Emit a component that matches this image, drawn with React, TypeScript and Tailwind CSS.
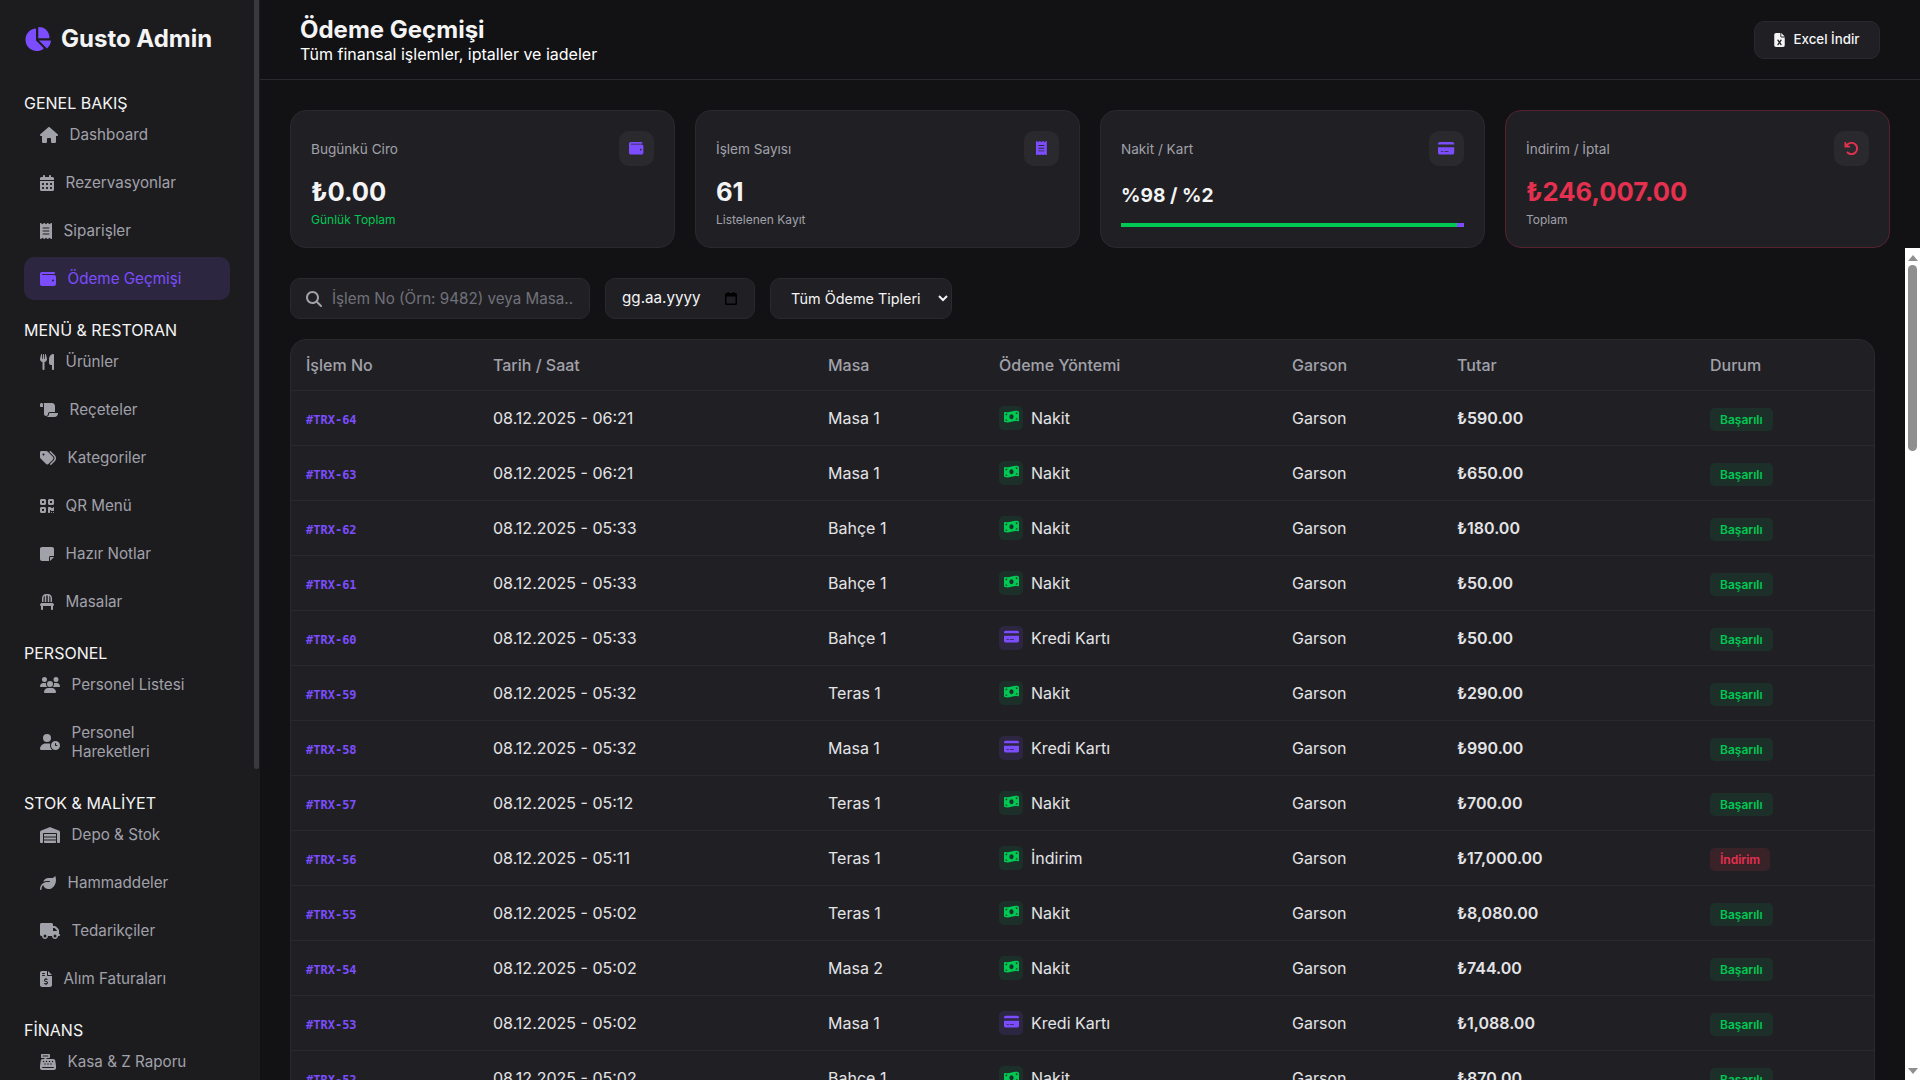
import type { IconType } from "react-icons"
import {
	FaArrowRotateLeft,
	FaCalendarDays,
	FaCashRegister,
	FaChair,
	FaChartPie,
	FaCreditCard,
	FaFileExcel,
	FaFileInvoiceDollar,
	FaHouse,
	FaLeaf,
	FaMagnifyingGlass,
	FaMoneyBillWave,
	FaNoteSticky,
	FaQrcode,
	FaReceipt,
	FaScroll,
	FaTags,
	FaTruck,
	FaUserClock,
	FaUsers,
	FaUtensils,
	FaWallet,
	FaWarehouse
} from "react-icons/fa6"

type NavItem = { label: string; icon: IconType; size: string; active?: boolean }

const nav: { title: string; items: NavItem[] }[] = [
	{
		title: "GENEL BAKIŞ",
		items: [
			{ label: "Dashboard", icon: FaHouse, size: "w-[18px] h-4" },
			{ label: "Rezervasyonlar", icon: FaCalendarDays, size: "w-3.5 h-4" },
			{ label: "Siparişler", icon: FaReceipt, size: "w-3 h-4" },
			{ label: "Ödeme Geçmişi", icon: FaWallet, size: "w-4 h-4", active: true }
		]
	},
	{
		title: "MENÜ & RESTORAN",
		items: [
			{ label: "Ürünler", icon: FaUtensils, size: "w-3.5 h-4" },
			{ label: "Reçeteler", icon: FaScroll, size: "w-[18px] h-4" },
			{ label: "Kategoriler", icon: FaTags, size: "w-4 h-4" },
			{ label: "QR Menü", icon: FaQrcode, size: "w-3.5 h-4" },
			{ label: "Hazır Notlar", icon: FaNoteSticky, size: "w-3.5 h-4" },
			{ label: "Masalar", icon: FaChair, size: "w-3.5 h-4" }
		]
	},
	{
		title: "PERSONEL",
		items: [
			{ label: "Personel Listesi", icon: FaUsers, size: "w-5 h-4" },
			{ label: "Personel Hareketleri", icon: FaUserClock, size: "w-5 h-4" }
		]
	},
	{
		title: "STOK & MALİYET",
		items: [
			{ label: "Depo & Stok", icon: FaWarehouse, size: "w-5 h-4" },
			{ label: "Hammaddeler", icon: FaLeaf, size: "w-4 h-4" },
			{ label: "Tedarikçiler", icon: FaTruck, size: "w-5 h-4" },
			{ label: "Alım Faturaları", icon: FaFileInvoiceDollar, size: "w-3 h-4" }
		]
	},
	{
		title: "FİNANS",
		items: [{ label: "Kasa & Z Raporu", icon: FaCashRegister, size: "w-4 h-4" }]
	}
]

type Row = {
	id: number
	time: string
	table: string
	method: "Nakit" | "Kredi Kartı" | "İndirim"
	amount: string
}

const rows: Row[] = [
	{ id: 64, time: "06:21", table: "Masa 1", method: "Nakit", amount: "590.00" },
	{ id: 63, time: "06:21", table: "Masa 1", method: "Nakit", amount: "650.00" },
	{ id: 62, time: "05:33", table: "Bahçe 1", method: "Nakit", amount: "180.00" },
	{ id: 61, time: "05:33", table: "Bahçe 1", method: "Nakit", amount: "50.00" },
	{ id: 60, time: "05:33", table: "Bahçe 1", method: "Kredi Kartı", amount: "50.00" },
	{ id: 59, time: "05:32", table: "Teras 1", method: "Nakit", amount: "290.00" },
	{ id: 58, time: "05:32", table: "Masa 1", method: "Kredi Kartı", amount: "990.00" },
	{ id: 57, time: "05:12", table: "Teras 1", method: "Nakit", amount: "700.00" },
	{ id: 56, time: "05:11", table: "Teras 1", method: "İndirim", amount: "17,000.00" },
	{ id: 55, time: "05:02", table: "Teras 1", method: "Nakit", amount: "8,080.00" },
	{ id: 54, time: "05:02", table: "Masa 2", method: "Nakit", amount: "744.00" },
	{ id: 53, time: "05:02", table: "Masa 1", method: "Kredi Kartı", amount: "1,088.00" },
	{ id: 52, time: "05:02", table: "Bahçe 1", method: "Nakit", amount: "870.00" }
]

const Sidebar = () => {
	return (
		<aside className="relative w-[260px] shrink-0 h-full overflow-hidden bg-[#1c1c1f] pl-6 pr-[30px] pt-6">
			<div className="flex items-center gap-[10px] mb-[41px] h-[29px]">
				<FaChartPie className="w-[27px] h-6 text-[#7c4dff]" />
				<span className="text-2xl font-bold text-[#f4f4f5]">Gusto Admin</span>
			</div>
			{nav.map((section) => (
				<div key={section.title} className="mb-[21px]">
					<div className="text-base font-normal leading-[19px] text-[#f4f4f5]">{section.title}</div>
					{section.items.map((item) => (
						<div
							key={item.label}
							className={`flex items-center gap-[11.6px] rounded-[10px] px-4 py-3 mb-[5px] text-[15.2px] leading-[19px] ${
								item.active ? "bg-[#2d2640] text-[#7c4dff]" : "text-[#a1a1aa]"
							}`}
						>
							<item.icon className={`${item.size} shrink-0`} />
							<span>{item.label}</span>
						</div>
					))}
				</div>
			))}
			{/* thumb only, the real bar does not show in a screenshot */}
			<div className="absolute right-px top-0 w-[5px] h-[769px] rounded-b-[3px] bg-[#3a3a3e]" />
		</aside>
	)
}

const Stat = ({
	label,
	icon: Icon,
	iconClass,
	danger,
	children
}: {
	label: string
	icon: IconType
	iconClass: string
	danger?: boolean
	children: React.ReactNode
}) => {
	return (
		<div
			className={`h-[138px] rounded-2xl border bg-[#202024] p-5 ${
				danger ? "border-[#55222f]" : "border-[#2a2a2e]"
			}`}
		>
			<div className="flex items-center justify-between h-[35px]">
				<span className="pt-0.5 text-[13.6px] text-[#a1a1aa]">{label}</span>
				<div className="flex items-center justify-center pb-px w-[35px] h-[35px] rounded-[10px] bg-[#2a2a2e]">
					<Icon className={`${iconClass} ${danger ? "text-[#e6304f]" : "text-[#7c4dff]"}`} />
				</div>
			</div>
			{children}
		</div>
	)
}

const Method = ({ method }: { method: Row["method"] }) => {
	const card = method === "Kredi Kartı"
	return (
		<div className="flex items-center">
			<span
				className={`flex items-center justify-center pb-px w-6 h-6 mr-2 rounded-[5px] ${
					card ? "bg-[#2d2640]" : "bg-[#1c3029]"
				}`}
			>
				{card ? (
					<FaCreditCard className="w-[15px] h-[13.33px] text-[#7c4dff]" />
				) : (
					<FaMoneyBillWave className="w-[15px] h-[13.33px] text-[#00c853]" />
				)}
			</span>
			{method}
		</div>
	)
}

const App = () => {
	return (
		<div className="flex h-screen overflow-hidden bg-[#121214] font-['Inter',sans-serif]">
			<Sidebar />
			<main className="flex flex-col flex-1 min-w-0 h-full">
				<header className="flex items-center justify-between h-20 shrink-0 pl-10 pr-10 border-b border-[#2a2a2e]">
					<div>
						<h1 className="text-2xl leading-[29px] font-bold text-[#f4f4f5]">Ödeme Geçmişi</h1>
						<p className="mt-px text-base leading-[19px] text-white">
							Tüm finansal işlemler, iptaller ve iadeler
						</p>
					</div>
					<button className="flex items-center justify-center gap-2 pt-px w-[126px] h-[38px] rounded-[10px] border border-[#2a2a2e] bg-[#202024] text-[13.33px] font-medium text-[#f4f4f5]">
						<FaFileExcel className="w-[11px] h-3.5" />
						Excel İndir
					</button>
				</header>

				<section className="grid grid-cols-4 gap-5 shrink-0 px-[30px] pt-[30px]">
					<Stat label="Bugünkü Ciro" icon={FaWallet} iconClass="w-[14.4px] h-[14.4px]">
						<div className="mt-[10px] text-[25.6px] leading-[31px] font-bold text-[#f4f4f5]">₺0.00</div>
						<div className="mt-[5px] text-xs leading-[15px] text-[#00c853]">Günlük Toplam</div>
					</Stat>
					<Stat label="İşlem Sayısı" icon={FaReceipt} iconClass="w-[10.8px] h-[14.4px]">
						<div className="mt-[10px] text-[25.6px] leading-[31px] font-bold text-[#f4f4f5]">61</div>
						<div className="mt-[5px] text-xs leading-[15px] text-[#a1a1aa]">Listelenen Kayıt</div>
					</Stat>
					<Stat label="Nakit / Kart" icon={FaCreditCard} iconClass="w-[16.2px] h-[14.4px]">
						<div className="mt-[18px] text-[19.2px] leading-[23px] font-bold text-[#f4f4f5]">%98 / %2</div>
						<div className="flex h-1 mt-4">
							<div className="w-[98%] bg-[#00c853]" />
							<div className="w-[2%] bg-[#7c4dff]" />
						</div>
					</Stat>
					<Stat label="İndirim / İptal" icon={FaArrowRotateLeft} iconClass="w-[15px] h-[15px]" danger>
						<div className="mt-[10px] text-[25.6px] leading-[31px] font-bold text-[#e6304f]">₺246,007.00</div>
						<div className="mt-[5px] text-xs leading-[15px] text-[#a1a1aa]">Toplam</div>
					</Stat>
				</section>

				<div className="flex flex-1 min-h-0">
					<div className="flex-1 min-w-0 overflow-hidden px-[30px] pt-[30px]">
						<div className="flex gap-[15px] mb-5">
							<div className="flex items-center gap-[10px] w-[300px] h-[41px] px-[15px] rounded-[10px] border border-[#2a2a2e] bg-[#202024]">
								<FaMagnifyingGlass className="w-4 h-4 shrink-0 text-[#a1a1aa]" />
								<input
									readOnly
									placeholder="İşlem No (Örn: 9482) veya Masa.."
									className="flex-1 min-w-0 pt-0.5 bg-transparent outline-none text-[15.2px] placeholder:text-[#71717a]"
								/>
							</div>
							<div className="flex items-center justify-between w-[150px] h-[41px] pl-4 pr-[17px] rounded-[10px] border border-[#2a2a2e] bg-[#202024] text-[15.2px] text-[#f4f4f5]">
								gg.aa.yyyy
								<svg viewBox="0 0 12 13" className="w-3 h-[13px] text-black" fill="currentColor" fillRule="evenodd">
									<path d="M2.5 0h1.5v1h4V0h1.5v1h1A1.5 1.5 0 0 1 12 2.5v9a1.5 1.5 0 0 1-1.5 1.5h-9A1.5 1.5 0 0 1 0 11.5v-9A1.5 1.5 0 0 1 1.5 1h1V0zM1.5 4.5v7h9v-7h-9z" />
								</svg>
							</div>
							<select className="w-[182px] h-[41px] pl-4 pr-1 rounded-[10px] border border-[#2a2a2e] bg-[#202024] text-[14.4px] text-[#f4f4f5] outline-none">
								<option>Tüm Ödeme Tipleri</option>
							</select>
						</div>

						<div className="rounded-2xl border border-[#2a2a2e] bg-[#202024] overflow-hidden">
							<table className="w-full table-fixed border-collapse text-base text-[#e4e4e7]">
								<thead>
									<tr className="h-[50px] text-left text-[#a1a1aa]">
										<th className="w-[187px] px-[15px] font-medium">İşlem No</th>
										<th className="w-[335px] px-[15px] font-medium">Tarih / Saat</th>
										<th className="w-[171px] px-[15px] font-medium">Masa</th>
										<th className="w-[293px] px-[15px] font-medium">Ödeme Yöntemi</th>
										<th className="w-[165px] px-[15px] font-medium">Garson</th>
										<th className="w-[253px] px-[15px] font-medium">Tutar</th>
										<th className="px-[15px] font-medium">Durum</th>
									</tr>
								</thead>
								<tbody>
									{rows.map((row) => (
										<tr key={row.id} className="h-[55px] border-t border-[#2a2a2e]">
											<td className="px-[15px] pt-[5px] font-['DejaVu_Sans_Mono',monospace] text-xs font-bold text-[#7c4dff]">
												#TRX-{row.id}
											</td>
											<td className="px-[15px]">08.12.2025 - {row.time}</td>
											<td className="px-[15px]">{row.table}</td>
											<td className="px-[15px]">
												<Method method={row.method} />
											</td>
											<td className="px-[15px]">Garson</td>
											<td className="px-[15px] font-semibold">₺{row.amount}</td>
											<td className="px-[15px] pt-[2px]">
												{row.method === "İndirim" ? (
													<span className="inline-block rounded-[5px] bg-[#3a2229] px-[10px] py-1 text-xs leading-[15px] font-semibold text-[#e6304f]">
														İndirim
													</span>
												) : (
													<span className="inline-block rounded-[5px] bg-[#1c3029] px-[10px] py-1 text-xs leading-[15px] font-semibold text-[#00c853]">
														Başarılı
													</span>
												)}
											</td>
										</tr>
									))}
								</tbody>
							</table>
						</div>
					</div>

					{/* native looking page scrollbar */}
					<div className="flex flex-col items-center justify-between w-[15px] shrink-0 bg-white">
						<div className="flex flex-col items-center w-full">
							<div className="mt-[7px] w-0 h-0 border-x-[5px] border-b-[6px] border-x-transparent border-b-[#8f8f8f]" />
							<div className="mt-[4px] w-[9px] h-[186px] rounded-[5px] bg-[#8f8f8f]" />
						</div>
						<div className="mb-[6px] w-0 h-0 border-x-[5px] border-t-[6px] border-x-transparent border-t-[#8f8f8f]" />
					</div>
				</div>
			</main>
		</div>
	)
}

export default App
